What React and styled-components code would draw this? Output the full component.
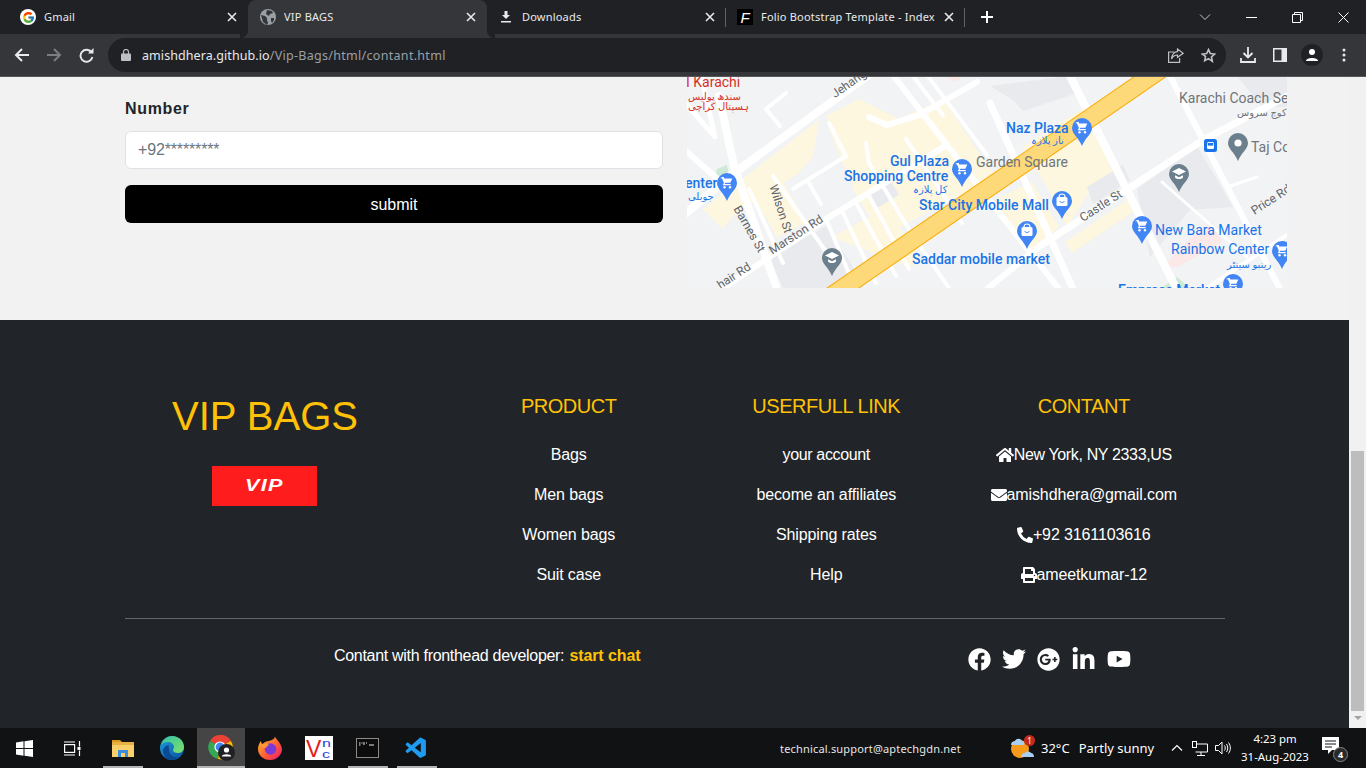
import React from "react";
import styled, { createGlobalStyle } from "styled-components";
import { FcGoogle } from "react-icons/fc";
import { FaHome, FaEnvelope, FaPhoneAlt, FaPrint, FaFacebook, FaTwitter, FaGooglePlus, FaLinkedinIn, FaYoutube } from "react-icons/fa";
import { VscVscode } from "react-icons/vsc";

const Global = createGlobalStyle`
  html, body { margin: 0; padding: 0; overflow: hidden; background: #f2f2f2; }
  * { box-sizing: border-box; }
`;
const Screen = styled.div`
  width: 1366px; height: 768px; display: flex; flex-direction: column; overflow: hidden;
  font-family: "Liberation Sans", Arial, sans-serif;
`;
const UI = `"Noto Sans", "Open Sans", sans-serif`;

/* ---------- browser chrome ---------- */
const TabStrip = styled.div`
  height: 38px; flex: none; display: flex; padding-left: 9px; background: #202124;
  box-shadow: inset 0 -4px 0 #35363a; position: relative;
`;
const Tab = styled.div`
  width: 239px; height: ${p => (p.$active ? "38px" : "34px")}; display: flex; align-items: center;
  padding: ${p => (p.$active ? "0 8px 4px 12px" : "0 8px 0 11px")}; gap: 8px; position: relative;
  color: #e8eaed; font: 11px ${UI};
  background: ${p => (p.$active ? "#35363a" : "transparent")};
  border-radius: ${p => (p.$active ? "8px 8px 0 0" : "0")};
  ${p => p.$sep && `&::after { content: ""; position: absolute; right: 0; top: 8px; height: 19px; width: 1px; background: #5f6368; }`}
  ${p => p.$active && `
    &::before { content: ""; position: absolute; left: -8px; bottom: 0; width: 8px; height: 8px; background: radial-gradient(circle at 0 0, #202124 8px, #35363a 8.5px); }
    &::after { content: ""; position: absolute; right: -8px; bottom: 0; width: 8px; height: 8px; background: radial-gradient(circle at 100% 0, #202124 8px, #35363a 8.5px); }
  `}
`;
const TabIcon = styled.span`
  width: 16px; height: 16px; flex: none; display: flex; align-items: center; justify-content: center;
  border-radius: 50%; background: ${p => p.$bg || "transparent"};
`;
const FolioIcon = styled.span`
  width: 16px; height: 16px; flex: none; background: #000; color: #fff; display: flex; align-items: center; justify-content: center;
  font: italic 400 15px "Liberation Sans", sans-serif;
`;
const TabTitle = styled.span`flex: 1; white-space: nowrap; overflow: hidden; letter-spacing: .2px; margin-top: -2px;`;
const TabClose = styled.svg`width: 10px; height: 10px; flex: none; margin-right: 3px;`;
const NewTab = styled.svg`width: 14px; height: 14px; margin: 10px 0 0 15px;`;
const WindowControls = styled.div`
  margin-left: auto; height: 34px; display: flex; align-items: center;
`;
const WinButton = styled.span`width: 46px; height: 34px; display: flex; align-items: center; justify-content: center;`;

const Toolbar = styled.div`
  height: 39px; flex: none; background: #35363a; display: flex; align-items: flex-start; border-bottom: 1px solid #55565a;
`;
const NavButton = styled.span`
  width: ${p => p.$w || 32}px; height: 34px; flex: none; display: flex; align-items: center; justify-content: center;
`;
const NavGroup = styled.div`display: flex; padding-left: 6px; width: 108px;`;
const Omnibox = styled.div`
  width: 1118px; height: 34px; background: #202124; border-radius: 17px; display: flex; align-items: center;
  padding: 0 2px 0 13px;
`;
const Url = styled.div`flex: 1; margin-left: 11px; font: 12.5px ${UI}; color: #9aa0a6; letter-spacing: .3px; white-space: nowrap;`;
const UrlHost = styled.span`color: #e8eaed; letter-spacing: .08px;`;
const ToolActions = styled.div`display: flex; padding-left: 6px;`;
const Avatar = styled.span`
  width: 22px; height: 22px; border-radius: 50%; background: #202124; display: flex; align-items: center; justify-content: center;
`;

/* ---------- page ---------- */
const Viewport = styled.div`flex: 1; min-height: 0; display: flex;`;
const Page = styled.div`flex: 1; min-width: 0; display: flex; flex-direction: column;`;
const Scrollbar = styled.div`
  width: 17px; flex: none; background: #f1f1f1; display: flex; flex-direction: column; justify-content: flex-end; align-items: center;
`;
const Thumb = styled.div`width: 13px; height: 260px; background: #bdbdbd; margin-bottom: 5px;`;
const ScrollArrow = styled.div`
  width: 0; height: 0; border-left: 4px solid transparent; border-right: 4px solid transparent; border-top: 4px solid #a3a3a3; margin-bottom: 8px;
`;
const TopSection = styled.section`
  height: 243px; flex: none; background: #f2f2f2; display: flex; gap: 24px; padding-left: 125px;
`;
const FormColumn = styled.form`width: 538px; flex: none; padding-top: 20px; display: flex; flex-direction: column;`;
const Label = styled.label`font-size: 16px; line-height: 24px; font-weight: 700; color: #212529; letter-spacing: .65px; margin-bottom: 10px;`;
const Input = styled.div`
  height: 38px; background: #fff; border: 1px solid #dee2e6; border-radius: 6px; padding: 0 12px; display: flex; align-items: center;
  font-size: 16px; color: #6c757d; letter-spacing: -.15px;
`;
const Submit = styled.button`
  height: 38px; margin-top: 16px; padding: 2px 0 0; background: #000; border: 0; border-radius: 6px; color: #fff; font: 16px "Liberation Sans", Arial, sans-serif;
`;
const MapFrame = styled.svg`width: 600px; height: 211px; flex: none; display: block;`;
const MapLabel = styled.text`
  font-family: Roboto, "DejaVu Sans", sans-serif; font-size: ${p => p.$size || 14}px; font-weight: ${p => p.$w || 500};
  fill: ${p => ({ blue: "#1a73e8", grey: "#70757a", road: "#5f6368", red: "#d93025" }[p.$tone])};
`;

const Footer = styled.footer`
  flex: 1; background: #212529; padding: 72px 124px 0 125px; display: flex; flex-direction: column;
`;
const FooterGrid = styled.div`display: grid; grid-template-columns: 315px repeat(3, 257.5px); height: 226px;`;
const Brand = styled.div`width: 278px; display: flex; flex-direction: column; align-items: center;`;
const BrandName = styled.div`font-size: 40px; line-height: 48px; color: #ffc107; white-space: nowrap; padding-left: 2px;`;
const BrandLogo = styled.div`
  width: 105px; height: 40px; margin-top: 26px; background: #ff1c1c; display: flex; align-items: center; justify-content: center;
`;
const BrandMark = styled.span`
  display: inline-block; color: #fff; font: italic 900 16px "Liberation Sans", Arial, sans-serif; letter-spacing: 1px; transform: scaleX(1.35);
`;
const LinkColumn = styled.div`padding-top: 2px; text-align: center;`;
const ColumnTitle = styled.h3`margin: 0 0 17px; font-size: 20px; line-height: 24px; font-weight: 400; color: #ffc107; letter-spacing: -.45px;`;
const LinkItem = styled.div`
  height: 40px; line-height: 40px; font-size: 16px; color: #fff; letter-spacing: ${p => (p.$tight ? "-.35px" : "-.12px")};
  display: flex; align-items: center; justify-content: center;
`;
const Rule = styled.div`height: 1px; width: 1100px; background: #63666a; flex: none;`;
const BottomRow = styled.div`display: flex; padding: 25px 0 0 209px; align-items: flex-start;`;
const ChatText = styled.div`font-size: 16px; line-height: 24px; color: #fff; white-space: nowrap; width: 634px; letter-spacing: -.3px;`;
const ChatLink = styled.b`color: #ffc107; margin-left: 1px; letter-spacing: -.1px;`;
const Socials = styled.div`display: flex; align-items: center; gap: 11px; color: #fff; margin-top: 3px; height: 24px;`;

/* ---------- taskbar ---------- */
const Taskbar = styled.div`height: 40px; flex: none; background: #101214; display: flex; align-items: center; color: #fff;`;
const StartGroup = styled.div`display: flex; padding-right: 2px;`;
const TaskCell = styled.div`
  width: ${p => p.$w || 49}px; height: 40px; flex: none; display: flex; align-items: center; justify-content: center; position: relative;
  background: ${p => (p.$active ? "#454545" : "transparent")};
  margin-left: ${p => (p.$active ? "1px" : "0")};
  ${p => p.$open && `&::after { content: ""; position: absolute; bottom: 0; left: 50%; transform: translateX(-50%); width: ${p.$active ? 48 : 40}px; height: 2px; background: #b4b4b4; }`}
`;
const SupportText = styled.div`margin-left: 339px; width: 229px; font: 11px ${UI}; color: #e6e6e6; white-space: nowrap; letter-spacing: .18px;`;
const WeatherIcon = styled.div`width: 26px; height: 26px; position: relative; flex: none;`;
const WeatherBadge = styled.span`
  position: absolute; right: 0; top: 0; width: 11px; height: 11px; border-radius: 50%; background: #c42b1c; color: #fff;
  font: 8px/11px ${UI}; text-align: center;
`;
const WeatherText = styled.div`margin-left: 6px; width: 124px; display: flex; gap: 9px; font: 13px ${UI}; color: #fff; white-space: nowrap;`;
const TrayIcon = styled.span`width: ${p => p.$w || 24}px; height: 40px; flex: none; display: flex; align-items: center; justify-content: center;`;
const Clock = styled.div`
  width: 76px; margin-left: 2px; flex: none; text-align: center; font: 11.4px/18px ${UI}; color: #fff; white-space: nowrap;
`;
const Notify = styled.div`width: 24px; height: 24px; margin-left: 8px; position: relative; flex: none;`;
const NotifyBadge = styled.span`
  position: absolute; right: -3px; bottom: -2px; width: 15px; height: 15px; border-radius: 50%; background: #2a2a2a; border: 1px solid #888;
  color: #fff; font: 700 9px/13px ${UI}; text-align: center;
`;

/* ---------- drawings ---------- */
const CloseX = ({ color = "#e8eaed" }) => (
  <TabClose viewBox="0 0 10 10"><path d="M1 1l8 8M9 1l-8 8" stroke={color} strokeWidth="1.6" /></TabClose>
);
const Globe = () => (
  <svg width="16" height="16" viewBox="0 0 16 16"><circle cx="8" cy="8" r="8" fill="#9aa0a6" /><path d="M1 6l4 1 2 2v2l1 3-1 2-4-3zM7 1l5 1 1 2-3 1-1 2-3-2zM11 9l3 0 0 2-2 3-1-2z" fill="#35363a" /></svg>
);
const Stroke = ({ size = 16, vb = 24, color = "#e8eaed", w = 2, d }) => (
  <svg width={size} height={size} viewBox={`0 0 ${vb} ${vb}`} fill="none" stroke={color} strokeWidth={w}><path d={d} /></svg>
);

const cart = "M-5 -6h1.7l.6 1.4h8l-2 4.4h-5l-.6 1.2h6v1.2h-8l1.2-2.2-2-4.8h-1.9z";
const Pin = ({ x, y, kind = "cart", color = "#4285f4" }) => (
  <g transform={`translate(${x} ${y})`}>
    <path d="M-10 0a10 10 0 1 1 20 0c0 6-7 10-10 18c-3-8-10-12-10-18z" fill={color} />
    {kind === "cart" && <g fill="#fff"><path d={cart} /><circle cx="-2.5" cy="4.2" r="1.2" /><circle cx="3" cy="4.2" r="1.2" /></g>}
    {kind === "bag" && <g><rect x="-5.5" y="-4" width="11" height="9" rx="1.5" fill="#fff" /><path d="M-2.500 0c1 2 4 2 5 0" fill="none" stroke="#4285f4" strokeWidth="1" /><path d="M-3-4c0-4 6-4 6 0" fill="none" stroke="#fff" strokeWidth="1.2" /></g>}
    {kind === "cap" && <g fill="#fff"><path d="M0-6l7 3.5-7 3.5-7-3.5z" /><path d="M-4 1.2l4 2 4-2v2.4c-2 2-6 2-8 0z" /></g>}
    {kind === "dot" && <circle r="3.6" fill="#fff" />}
  </g>
);

const roads = [
  [8, "M-10 144L43 99L176 2L190 -8"],
  [6, "M20 222L139 142L260 68"],
  [6, "M182 40L200 48L232 38L290 5"],
  [7, "M353 169L516 63L610 14"],
  [6, "M300 212L353 169"],
  [8, "M32 19L47 89L89 209"],
  [6, "M0 75L42 112"],
  [5, "M14 -2L28 60M0 28L28 60"],
  [4, "M99 16L79 32L93 49"],
  [6, "M206 -2L310 133L372 212"],
  [7, "M303 26L386 212"],
  [8, "M383 -1L490 213"],
  [6, "M483 -1L593 212"],
  [4, "M142 46L159 79L106 112"],
  [4, "M122 106L134 127"],
  [4, "M86 99L142 179"],
  [4, "M62 112L96 186"],
  [4, "M179 66L182 86L226 159L262 211"],
  [4, "M219 62L275 146"],
  [4, "M139 142L166 206M156 136L189 206M169 126L209 199M182 119L222 192"],
  [4, "M225 -2L256 38M240 -2L300 78"],
  [3, "M475 105L560 180"],
  [4, "M520 211L600 158"],
  [3, "M540 110L570 100"],
];

const MapView = () => (
  <MapFrame viewBox="0 0 600 211">
    <rect width="600" height="211" fill="#f1f3f4" />
    <g fill="#fef7e0">
      <path d="M16 132L132 43L126 79L112 96L46 139L36 152Z" />
      <path d="M139 39L172 22L212 42L256 22L292 76L309 99L196 159L170 120L145 60Z" />
      <path d="M62 112L92 98L120 145L90 160Z" />
      <path d="M335 70L400 29L425 95L400 118L380 150L360 110Z" />
      <path d="M303 125L345 105L372 150L340 178L322 150Z" />
      <path d="M378 165L442 122L446 135L385 176Z" />
      <path d="M145 160L200 130L235 185L222 190Z" />
    </g>
    <g fill="#e8eaed">
      <path d="M303 9L383 -1L390 16L336 34L326 23Z" />
      <path d="M450 112L510 69L546 130L503 133L463 180Z" />
      <path d="M83 182L139 149L172 199L143 211L96 211Z" />
      <path d="M400 110L436 88L443 104L406 127Z" />
      <path d="M550 -1L600 -1L600 30L575 30Z" />
      <path d="M180 115L205 105L212 118L188 132Z" />
    </g>
    <path d="M476 190L505 160L525 145L535 165L490 190Z" fill="#fce8e6" />
    <path d="M260 0H275L268 5Z" fill="#fce8e6" />
    <path d="M472 213L490 200L505 213Z" fill="#ceead6" />
    <path d="M30 92L40 88L42 98L28 100Z" fill="#ceead6" />
    <g fill="none" stroke="#fff" strokeLinecap="round">
      {roads.map(([w, d], i) => <path key={i} d={d} strokeWidth={w} />)}
    </g>
    <path d="M140 222L480 -12" stroke="#f9ab00" strokeWidth="19" />
    <path d="M140 222L480 -12" stroke="#fdd97a" strokeWidth="17" />

    <MapLabel $tone="red" $size={14} $w={400} x="-1" y="10">I Karachi</MapLabel>
    <MapLabel $tone="red" $size={10} $w={400} x="1" y="23">سندھ پولیس</MapLabel>
    <MapLabel $tone="red" $size={10} $w={400} x="1" y="33">ہسپتال کراچی</MapLabel>
    <MapLabel $tone="road" $size={12} $w={400} textAnchor="middle" transform="translate(167 8) rotate(-35)">Jehangir</MapLabel>
    <MapLabel $tone="road" $size={12} $w={400} textAnchor="middle" transform="translate(59 154) rotate(60)">Barnes St</MapLabel>
    <MapLabel $tone="road" $size={12} $w={400} textAnchor="middle" transform="translate(90 133) rotate(72)">Wilson St</MapLabel>
    <MapLabel $tone="road" $size={12} $w={400} textAnchor="middle" transform="translate(111 161) rotate(-33)">Marston Rd</MapLabel>
    <MapLabel $tone="road" $size={12} $w={400} textAnchor="middle" transform="translate(49 202) rotate(-33)">hair Rd</MapLabel>
    <MapLabel $tone="road" $size={12} $w={400} textAnchor="middle" transform="translate(416 132) rotate(-33)">Castle St</MapLabel>
    <MapLabel $tone="road" $size={12} $w={400} textAnchor="middle" transform="translate(586 126) rotate(-33)">Price Rd</MapLabel>

    <MapLabel $tone="blue" x="319" y="56">Naz Plaza</MapLabel>
    <MapLabel $tone="blue" $size={10} $w={400} x="344" y="67">ناز پلازہ</MapLabel>
    <MapLabel $tone="blue" x="203" y="89">Gul Plaza</MapLabel>
    <MapLabel $tone="blue" x="157" y="104">Shopping Centre</MapLabel>
    <MapLabel $tone="blue" $size={10} $w={400} x="226" y="116">کل پلازہ</MapLabel>
    <MapLabel $tone="grey" x="289" y="90" $w={400}>Garden Square</MapLabel>
    <MapLabel $tone="blue" x="232" y="133">Star City Mobile Mall</MapLabel>
    <MapLabel $tone="blue" x="225" y="187">Saddar mobile market</MapLabel>
    <MapLabel $tone="blue" x="-2" y="111">enter</MapLabel>
    <MapLabel $tone="blue" $size={10} $w={400} x="1" y="123">جوبلی</MapLabel>
    <MapLabel $tone="grey" x="492" y="26" $w={400}>Karachi Coach Service</MapLabel>
    <MapLabel $tone="grey" $size={10} $w={400} x="550" y="39">کوچ سروس</MapLabel>
    <MapLabel $tone="grey" x="564" y="75" $w={400}>Taj Complex</MapLabel>
    <MapLabel $tone="blue" x="468" y="158" $w={400}>New Bara Market</MapLabel>
    <MapLabel $tone="blue" x="484" y="177" $w={400}>Rainbow Center</MapLabel>
    <MapLabel $tone="blue" $size={10} $w={400} x="540" y="191">رینبو سینٹر</MapLabel>
    <MapLabel $tone="blue" x="431" y="218">Empress Market</MapLabel>

    <Pin x={395} y={51} />
    <Pin x={275} y={92} />
    <Pin x={40} y={106} />
    <Pin x={375} y={124} kind="bag" />
    <Pin x={340} y={154} kind="bag" />
    <Pin x={455} y={149} />
    <Pin x={595} y={174} />
    <Pin x={546} y={207} />
    <Pin x={145} y={181} kind="cap" color="#6b7f8c" />
    <Pin x={492} y={97} kind="cap" color="#6b7f8c" />
    <Pin x={551} y={66} kind="dot" color="#6b7f8c" />
    <rect x="517" y="62" width="13" height="13" rx="2.5" fill="#1a73e8" />
    <rect x="520" y="65" width="7" height="7" rx="1.5" fill="#fff" />
    <rect x="520.8" y="66" width="5.4" height="2.6" fill="#1a73e8" />
  </MapFrame>
);

const WinLogo = () => (
  <svg width="17" height="17" viewBox="0 0 17 17" fill="#fff"><path d="M0 2.4L7.5 1.3V8H0zM8.5 1.2L17 0V8H8.5zM0 9H7.5V15.7L0 14.6zM8.5 9H17V17L8.5 15.8z" /></svg>
);
const TaskView = () => (
  <svg width="17" height="15" viewBox="0 0 17 15" fill="none" stroke="#fff" strokeWidth="1.2"><rect x=".6" y="3.6" width="10" height="7.8" /><path d="M0 1h11M0 14h11M15.5 0v5.500M15.5 9.500V15" /><rect x="13.5" y="6" width="3" height="3" fill="#fff" stroke="none" /></svg>
);
const FolderIcon = () => (
  <svg width="22" height="18" viewBox="0 0 22 18"><path d="M0 1h8l2 2h-10z" fill="#d99a1f" /><rect y="3" width="22" height="15" fill="#f9d069" /><path d="M0 3h22v3H0z" fill="#e9b13f" /><rect x="6" y="11" width="10" height="7" fill="#3a8ee0" /><rect x="9" y="14" width="4" height="4" fill="#f9d069" /></svg>
);
const EdgeIcon = () => (
  <svg width="24" height="24" viewBox="0 0 24 24">
    <defs>
      <linearGradient id="eg" x1="0" y1="0" x2="1" y2="1"><stop offset="0" stopColor="#36c2a4" /><stop offset="1" stopColor="#7ee06a" /></linearGradient>
      <linearGradient id="eb" x1="0" y1="0" x2="1" y2="1"><stop offset="0" stopColor="#1ea0d8" /><stop offset="1" stopColor="#0c4f9e" /></linearGradient>
    </defs>
    <circle cx="12" cy="12" r="12" fill="url(#eb)" />
    <path d="M1 9C3 3 8 0 12 0c7 0 12 5 12 11 0 4-3 6-6 6-3 0-5-1-5-3 0-1 1-2 1-3 0-3-3-5-6-5-3 0-6 1-7 3z" fill="url(#eg)" />
    <path d="M9 13c0 5 4 9 9 8-2 2-4 3-6 3-5 0-9-4-9-9 0-3 3-6 6-6-1 1-0 2 0 4z" fill="#0a4a94" />
  </svg>
);
const ChromeIcon = () => (
  <svg width="27" height="26" viewBox="0 0 27 26">
    <path d="M12 12L2 6A12 12 0 0 1 23 6z" fill="#ea4335" />
    <path d="M12 12L2 6A12 12 0 0 0 10 24z" fill="#34a853" />
    <path d="M12 12L23 6A12 12 0 0 1 10 24z" fill="#fbbc05" />
    <circle cx="12" cy="12" r="5.6" fill="#fff" /><circle cx="12" cy="12" r="4.4" fill="#4285f4" />
    <circle cx="18.5" cy="17.5" r="8.5" fill="#202124" /><circle cx="18.5" cy="15" r="2.6" fill="#fff" /><path d="M13.8 21.5c0-3 9.4-3 9.4 0z" fill="#fff" />
  </svg>
);
const FirefoxIcon = () => (
  <svg width="24" height="24" viewBox="0 0 24 24">
    <defs><linearGradient id="ff" x1="0" y1="0" x2="1" y2="1"><stop offset="0" stopColor="#ffbd2e" /><stop offset=".6" stopColor="#ff5634" /><stop offset="1" stopColor="#e31587" /></linearGradient></defs>
    <path d="M17 0c0 3 6 6 7 13 0 6-5 11-12 11S0 19 0 13C0 9 2 6 3 5c0 2 1 3 2 3 1-2 4-3 6-3 3-1 6-2 6-5z" fill="url(#ff)" />
    <circle cx="12.5" cy="13" r="5.8" fill="#7b3ad8" />
    <path d="M2 9c3-2 7-2 9 0-2 1-3 2-3 3-3 0-5-1-6-3z" fill="#ff9a2e" />
  </svg>
);
const VncTile = styled.svg`width: 28px; height: 24px; background: #fff;`;
const VncText = styled.text`font-family: "Liberation Sans", sans-serif; font-weight: 400; font-size: ${p => p.$size}px; fill: ${p => p.$color};`;
const VncIcon = () => (
  <VncTile viewBox="0 0 28 24">
    <VncText $size={23} $color="#e31c1c" x="1" y="21">V</VncText>
    <VncText $size={10} $color="#1c40e3" transform="translate(17 10.500) scale(1.6 1)">n</VncText>
    <VncText $size={10} $color="#1c40e3" transform="translate(17 22) scale(1.6 1)">c</VncText>
  </VncTile>
);
const CmdTile = styled.svg`width: 23px; height: 20px;`;
const CmdIcon = () => (
  <CmdTile viewBox="0 0 23 20">
    <rect x=".5" y=".5" width="22" height="19" fill="#0c0c0c" stroke="#8a8a8a" />
    <path d="M3 5h1.500M5.500 5h1M8 4v3M10 5h1M3 7h1.500M13 7h5" stroke="#e8e8e8" strokeWidth="1" />
  </CmdTile>
);
const VsIcon = styled(VscVscode)`color: #1f9cf0; font-size: 25px;`;

const ContactIcon = styled.span`display: inline-flex; font-size: ${p => p.$size || 16}px;`;

export default function App() {
  return (
    <Screen>
      <Global />
      <TabStrip>
        <Tab>
          <TabIcon $bg="#fff"><FcGoogle size={13} /></TabIcon>
          <TabTitle>Gmail</TabTitle><CloseX />
        </Tab>
        <Tab $active>
          <TabIcon><Globe /></TabIcon>
          <TabTitle>VIP BAGS</TabTitle><CloseX />
        </Tab>
        <Tab $sep>
          <TabIcon>
            <svg width="12" height="12" viewBox="0 0 12 12" fill="#e8eaed"><path d="M4.5 0h3v4H10L6 8 2 4h2.500zM1 10h10v1.500H1z" /></svg>
          </TabIcon>
          <TabTitle>Downloads</TabTitle><CloseX />
        </Tab>
        <Tab $sep>
          <FolioIcon>F</FolioIcon>
          <TabTitle>Folio Bootstrap Template - Index</TabTitle><CloseX />
        </Tab>
        <NewTab viewBox="0 0 14 14"><path d="M7 1v12M1 7h12" stroke="#fff" strokeWidth="2" /></NewTab>
        <WindowControls>
          <WinButton><Stroke size={12} vb={12} w={1} color="#c4c6c9" d="M1 3.500l5 5 5-5" /></WinButton>
          <WinButton><Stroke size={11} vb={11} w={1} color="#fff" d="M0 5.500h11" /></WinButton>
          <WinButton><Stroke size={11} vb={11} w={1} color="#fff" d="M.5 2.500h8v8h-8zM2.500 2.500v-2h8v8h-2" /></WinButton>
          <WinButton><Stroke size={11} vb={11} w={1} color="#fff" d="M.5.5l10 10M10.500.5l-10 10" /></WinButton>
        </WindowControls>
      </TabStrip>
      <Toolbar>
        <NavGroup>
          <NavButton><Stroke size={16} vb={16} d="M15 8H2M8 2L2 8l6 6" /></NavButton>
          <NavButton><Stroke size={16} vb={16} color="#7b7d81" d="M1 8h13M8 2l6 6-6 6" /></NavButton>
          <NavButton>
            <svg width="15" height="15" viewBox="0 0 15 15" fill="none"><path d="M12.5 4.400A6 6 0 1 0 13.400 9" stroke="#e8eaed" strokeWidth="1.9" /><path d="M9 5.600h5.500V0z" fill="#e8eaed" /></svg>
          </NavButton>
        </NavGroup>
        <Omnibox>
          <svg width="10" height="12" viewBox="0 0 10 12"><rect y="4.500" width="10" height="7.500" rx="1" fill="#bdc1c6" /><path d="M2.500 5V3a2.500 2.500 0 0 1 5 0v2" fill="none" stroke="#bdc1c6" strokeWidth="1.2" /></svg>
          <Url><UrlHost>amishdhera.github.io</UrlHost>/Vip-Bags/html/contant.html</Url>
          <NavButton $w={32}>
            <svg width="16" height="15" viewBox="0 0 16 15" fill="none" stroke="#bdc1c6" strokeWidth="1.2"><path d="M6 4H.6v10.400h11V10" /><path d="M9.500 1l5.700 4.300-5.700 4V7C7 7 5 8 3.500 11 4 7 6 3.800 9.500 3.600z" /></svg>
          </NavButton>
          <NavButton $w={32}>
            <svg width="15" height="15" viewBox="0 0 24 24" fill="none" stroke="#bdc1c6" strokeWidth="2.6"><path d="M12 2.500l2.900 6.400 7 .8-5.200 4.700 1.400 6.900L12 17l-6.100 3.300 1.400-6.900L2.100 9.700l7-.8z" /></svg>
          </NavButton>
        </Omnibox>
        <ToolActions>
          <NavButton>
            <svg width="16" height="16" viewBox="0 0 16 16" fill="none" stroke="#e8eaed" strokeWidth="1.8"><path d="M8 0v10M3.500 6L8 10.500 12.500 6M1 11v4h14v-4" /></svg>
          </NavButton>
          <NavButton>
            <svg width="14" height="14" viewBox="0 0 14 14"><rect width="14" height="14" fill="#e8eaed" /><rect x="1.500" y="1.500" width="7" height="11" fill="#35363a" /></svg>
          </NavButton>
          <NavButton>
            <Avatar>
              <svg width="12" height="12" viewBox="0 0 12 12" fill="#fff"><circle cx="6" cy="3" r="3" /><path d="M0 12c0-4 12-4 12 0z" /></svg>
            </Avatar>
          </NavButton>
          <NavButton>
            <svg width="4" height="14" viewBox="0 0 4 14" fill="#e8eaed"><circle cx="2" cy="2" r="1.500" /><circle cx="2" cy="7" r="1.500" /><circle cx="2" cy="12" r="1.500" /></svg>
          </NavButton>
        </ToolActions>
      </Toolbar>

      <Viewport>
        <Page>
          <TopSection>
            <FormColumn>
              <Label>Number</Label>
              <Input>+92*********</Input>
              <Submit type="button">submit</Submit>
            </FormColumn>
            <MapView />
          </TopSection>
          <Footer>
            <FooterGrid>
              <Brand>
                <BrandName>VIP BAGS</BrandName>
                <BrandLogo><BrandMark>VIP</BrandMark></BrandLogo>
              </Brand>
              <LinkColumn>
                <ColumnTitle>PRODUCT</ColumnTitle>
                <LinkItem>Bags</LinkItem>
                <LinkItem>Men bags</LinkItem>
                <LinkItem>Women bags</LinkItem>
                <LinkItem>Suit case</LinkItem>
              </LinkColumn>
              <LinkColumn>
                <ColumnTitle>USERFULL LINK</ColumnTitle>
                <LinkItem $tight>your account</LinkItem>
                <LinkItem>become an affiliates</LinkItem>
                <LinkItem>Shipping rates</LinkItem>
                <LinkItem>Help</LinkItem>
              </LinkColumn>
              <LinkColumn>
                <ColumnTitle>CONTANT</ColumnTitle>
                <LinkItem $tight><ContactIcon $size={18}><FaHome /></ContactIcon>New York, NY 2333,US</LinkItem>
                <LinkItem><ContactIcon><FaEnvelope /></ContactIcon>amishdhera@gmail.com</LinkItem>
                <LinkItem><ContactIcon><FaPhoneAlt /></ContactIcon>+92 3161103616</LinkItem>
                <LinkItem><ContactIcon><FaPrint /></ContactIcon>ameetkumar-12</LinkItem>
              </LinkColumn>
            </FooterGrid>
            <Rule />
            <BottomRow>
              <ChatText>Contant with fronthead developer: <ChatLink>start chat</ChatLink></ChatText>
              <Socials>
                <FaFacebook size={23} />
                <FaTwitter size={24} />
                <FaGooglePlus size={23} />
                <FaLinkedinIn size={25} />
                <FaYoutube size={24} />
              </Socials>
            </BottomRow>
          </Footer>
        </Page>
        <Scrollbar>
          <Thumb />
          <ScrollArrow />
        </Scrollbar>
      </Viewport>

      <Taskbar>
        <StartGroup>
          <TaskCell $w={48}><WinLogo /></TaskCell>
          <TaskCell $w={48}><TaskView /></TaskCell>
        </StartGroup>
        <TaskCell $open><FolderIcon /></TaskCell>
        <TaskCell><EdgeIcon /></TaskCell>
        <TaskCell $w={48} $open $active><ChromeIcon /></TaskCell>
        <TaskCell><FirefoxIcon /></TaskCell>
        <TaskCell><VncIcon /></TaskCell>
        <TaskCell $open><CmdIcon /></TaskCell>
        <TaskCell $open><VsIcon /></TaskCell>
        <SupportText>technical.support@aptechgdn.net</SupportText>
        <WeatherIcon>
          <svg width="26" height="26" viewBox="0 0 26 26"><circle cx="11" cy="14" r="9" fill="#f59a1b" /><path d="M2 10c0-3 2-4 4-4 1-3 6-3 7 0 2 0 3 2 2 4z" fill="#a9d0f0" /><path d="M12 22c0-3 2-4 4-4 1-2 5-2 6 0 2 0 3 2 3 4z" fill="#a9d0f0" /></svg>
          <WeatherBadge>1</WeatherBadge>
        </WeatherIcon>
        <WeatherText><span>32°C</span><span>Partly sunny</span></WeatherText>
        <TrayIcon $w={24}><Stroke size={12} vb={12} w={1.2} color="#fff" d="M1 8.500l5-5 5 5" /></TrayIcon>
        <TrayIcon $w={22}>
          <svg width="16" height="15" viewBox="0 0 16 15" fill="none" stroke="#fff"><path d="M3.500 3H15.500V11H3.500M9 11v3M5 14.500h8" /><rect x=".5" y=".5" width="4" height="6" fill="#101214" /></svg>
        </TrayIcon>
        <TrayIcon $w={24}>
          <svg width="16" height="14" viewBox="0 0 16 14" fill="none" stroke="#fff"><path d="M.5 4.500h3L7 1v12L3.500 9.500h-3z" /><path d="M9.500 4.500c1 1.500 1 3.500 0 5M11.500 3c1.700 2.500 1.700 5.500 0 8M13.500 1.500c2.500 3.500 2.500 7.500 0 11" /></svg>
        </TrayIcon>
        <Clock>4:23 pm<br />31-Aug-2023</Clock>
        <Notify>
          <svg width="20" height="20" viewBox="0 0 20 20"><path d="M1 1h17v13h-7l-4 4v-4H1z" fill="#fff" /><path d="M4 5h11M4 8h11M4 11h7" stroke="#101214" /></svg>
          <NotifyBadge>4</NotifyBadge>
        </Notify>
      </Taskbar>
    </Screen>
  );
}
